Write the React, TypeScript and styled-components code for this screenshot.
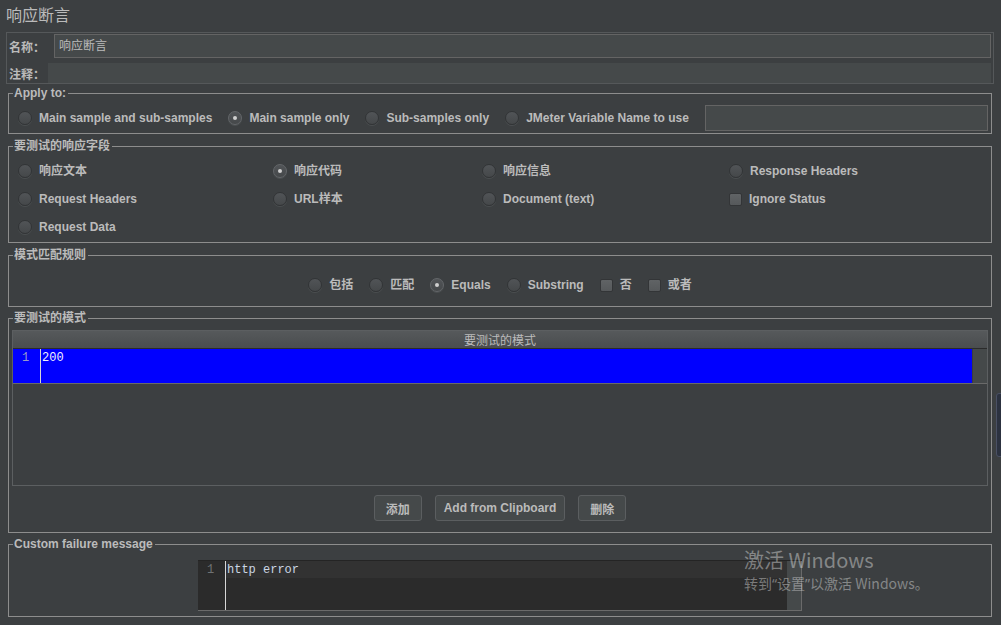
import styled, { createGlobalStyle } from 'styled-components';

const GlobalStyle = createGlobalStyle`
  html, body {
    margin: 0;
    padding: 0;
    background: #3c3f41;
  }
  body {
    font-family: "Liberation Sans", Arial, "Noto Sans CJK SC", sans-serif;
  }
`;

const fieldOptions = [
  { label: '响应文本' },
  { label: '响应代码', checked: true },
  { label: '响应信息' },
  { label: 'Response Headers' },
  { label: 'Request Headers' },
  { label: 'URL样本' },
  { label: 'Document (text)' },
  { label: 'Ignore Status', box: true },
  { label: 'Request Data' },
];

const ruleOptions = [
  { label: '包括' },
  { label: '匹配' },
  { label: 'Equals', checked: true },
  { label: 'Substring' },
  { label: '否', box: true },
  { label: '或者', box: true },
];

const App = () => {
  return (
    <Page>
      <GlobalStyle />
      <Title>响应断言</Title>

      <NamePanel>
        <FieldRow $height={24}>
          <FieldLabel $width={46}>名称：</FieldLabel>
          <TextBox $bordered>响应断言</TextBox>
        </FieldRow>
        <FieldRow $height={20}>
          <FieldLabel $width={40}>注释：</FieldLabel>
          <TextBox />
        </FieldRow>
      </NamePanel>

      <Sections>
        <Fieldset $mt={2}>
          <Legend>Apply to:</Legend>
          <OptionRow $pad="5px 3px 2px 9px">
            <Option>
              <Radio />
              Main sample and sub-samples
            </Option>
            <Option>
              <Radio $checked />
              Main sample only
            </Option>
            <Option>
              <Radio />
              Sub-samples only
            </Option>
            <Option>
              <Radio />
              JMeter Variable Name to use
            </Option>
            <VarField />
          </OptionRow>
        </Fieldset>

        <Fieldset $mt={5}>
          <Legend>要测试的响应字段</Legend>
          <OptionGrid>
            {fieldOptions.map((o) => (
              <Option key={o.label}>
                {o.box ? <CheckBox /> : <Radio $checked={o.checked} />}
                {o.label}
              </Option>
            ))}
          </OptionGrid>
        </Fieldset>

        <Fieldset $mt={5}>
          <Legend>模式匹配规则</Legend>
          <OptionRow $pad="14px 0 12px 0" $center>
            {ruleOptions.map((o) => (
              <Option key={o.label}>
                {o.box ? <CheckBox /> : <Radio $checked={o.checked} />}
                {o.label}
              </Option>
            ))}
          </OptionRow>
        </Fieldset>

        <Fieldset $mt={4}>
          <Legend>要测试的模式</Legend>
          <Table>
            <TableHeader>要测试的模式</TableHeader>
            <SelectedRow>
              <LineNo $onBlue>1</LineNo>
              <Caret />
              <CodeText $onBlue>200</CodeText>
              <RowStrip />
            </SelectedRow>
          </Table>
          <ButtonBar>
            <Button>添加</Button>
            <Button>Add from Clipboard</Button>
            <Button>删除</Button>
          </ButtonBar>
        </Fieldset>

        <Fieldset $mt={4}>
          <Legend>Custom failure message</Legend>
          <EditorWrap>
            <Editor>
              <LineNo>1</LineNo>
              <Caret />
              <EditorBody>
                <CurrentLine>
                  <CodeText>http error</CodeText>
                </CurrentLine>
              </EditorBody>
              <EditorStrip />
            </Editor>
          </EditorWrap>
        </Fieldset>
      </Sections>

      <Watermark>
        <WatermarkTitle>激活 Windows</WatermarkTitle>
        <WatermarkText>
          转到<Quote>“</Quote>设置<Quote>”</Quote>以激活 Windows。
        </WatermarkText>
      </Watermark>
      <EdgeTab />
    </Page>
  );
};

export default App;

const Page = styled.div`
  position: relative;
  width: 1001px;
  height: 625px;
  overflow: hidden;
  background: #3c3f41;
  color: #bbbbbb;
`;

const Title = styled.div`
  height: 30px;
  padding-left: 6px;
  font-family: "Noto Sans CJK SC", sans-serif;
  font-size: 16px;
  line-height: 28px;
  color: #bbbbbb;
`;

const NamePanel = styled.div`
  margin: 2px 7px 0 6px;
  padding: 1px 2px 0 1px;
  border: 1px solid #55585a;
  display: flex;
  flex-direction: column;
  gap: 5px;
`;

const FieldRow = styled.div<{ $height: number }>`
  display: flex;
  align-items: center;
  height: ${(p) => p.$height}px;
`;

const FieldLabel = styled.div<{ $width: number }>`
  width: ${(p) => p.$width}px;
  padding-left: 1px;
  box-sizing: border-box;
  font-size: 12px;
  font-weight: bold;
  color: #bbbbbb;
`;

const TextBox = styled.div<{ $bordered?: boolean }>`
  flex: 1;
  height: 100%;
  box-sizing: border-box;
  background: #45494a;
  border: 1px solid ${(p) => (p.$bordered ? '#646464' : '#45494a')};
  padding-left: 4px;
  font-size: 12px;
  line-height: 22px;
  color: #bbbbbb;
`;

const Sections = styled.div`
  display: flex;
  flex-direction: column;
`;

const Fieldset = styled.fieldset<{ $mt: number }>`
  margin: ${(p) => p.$mt}px 9px 0 8px;
  padding: 0;
  border: 1px solid #8d8d8d;
  min-width: 0;
`;

const Legend = styled.legend`
  margin-left: 4px;
  padding: 0 2px 0 1px;
  font-size: 12px;
  font-weight: bold;
  line-height: 14px;
  color: #bbbbbb;
`;

const OptionRow = styled.div<{ $pad: string; $center?: boolean }>`
  display: flex;
  align-items: center;
  justify-content: ${(p) => (p.$center ? 'center' : 'flex-start')};
  gap: 16px;
  padding: ${(p) => p.$pad};
  min-height: 18px;
`;

const OptionGrid = styled.div`
  display: grid;
  grid-template-columns: 255px 209px 247px 1fr;
  grid-auto-rows: 28px;
  align-items: center;
  padding: 4px 0 1px 9px;
`;

const Option = styled.label`
  display: flex;
  align-items: center;
  gap: 7px;
  height: 16px;
  font-size: 12px;
  font-weight: bold;
  line-height: 14px;
  color: #bbbbbb;
  white-space: nowrap;
`;

const Radio = styled.span<{ $checked?: boolean }>`
  position: relative;
  width: 14px;
  height: 14px;
  flex: none;
  border-radius: 50%;
  box-sizing: border-box;
  border: 1px solid ${(p) => (p.$checked ? '#636669' : '#323436')};
  background: linear-gradient(#515457, #45484a);
  box-shadow: 0 1px 0 rgba(90, 93, 95, 0.5);

  &::after {
    content: '';
    display: ${(p) => (p.$checked ? 'block' : 'none')};
    position: absolute;
    left: 4px;
    top: 4px;
    width: 4px;
    height: 4px;
    border-radius: 50%;
    background: #cfcfcf;
  }
`;

const CheckBox = styled.span`
  width: 13px;
  height: 13px;
  flex: none;
  box-sizing: border-box;
  border: 1px solid #333537;
  border-radius: 2px;
  background: linear-gradient(#606365, #56595b);
`;

const VarField = styled.div`
  margin-left: auto;
  width: 293px;
  height: 26px;
  box-sizing: border-box;
  background: #45494a;
  border: 1px solid #646464;
`;

const Table = styled.div`
  margin: 5px 3px 0 3px;
  height: 156px;
  box-sizing: border-box;
  border: 1px solid #5c5f61;
  display: flex;
  flex-direction: column;
`;

const TableHeader = styled.div`
  height: 18px;
  flex: none;
  box-sizing: border-box;
  border-bottom: 1px solid #2b2b2b;
  background: linear-gradient(#56595b, #4a4d4f);
  font-size: 12px;
  line-height: 17px;
  text-align: center;
  color: #bbbbbb;
  font-family: "Noto Sans CJK SC", sans-serif;
`;

const SelectedRow = styled.div`
  height: 35px;
  flex: none;
  display: flex;
  box-sizing: border-box;
  border-bottom: 1px solid #6a6a6a;
  background: #0000ff;
`;

const LineNo = styled.div<{ $onBlue?: boolean }>`
  width: 27px;
  flex: none;
  padding: 2px 0 0 9px;
  box-sizing: border-box;
  font-family: "Liberation Mono", "DejaVu Sans Mono", monospace;
  font-size: 12px;
  line-height: 14px;
  color: ${(p) => (p.$onBlue ? '#9a9ac8' : '#6f7274')};
`;

const Caret = styled.div`
  width: 1px;
  flex: none;
  background: #d6d6d6;
`;

const CodeText = styled.div<{ $onBlue?: boolean }>`
  flex: 1;
  padding: 2px 0 0 1px;
  font-family: "Liberation Mono", "DejaVu Sans Mono", monospace;
  font-size: 12px;
  line-height: 14px;
  color: ${(p) => (p.$onBlue ? '#f0f0ff' : '#cbd6e4')};
`;

const RowStrip = styled.div`
  width: 14px;
  flex: none;
  background: #45494a;
  border-left: 1px solid #3a3d3f;
`;

const ButtonBar = styled.div`
  display: flex;
  justify-content: center;
  gap: 13px;
  margin-top: 9px;
  padding-bottom: 11px;
`;

const Button = styled.button`
  min-width: 48px;
  height: 26px;
  padding: 0 8px;
  background: #45494a;
  border: 1px solid #5b5e60;
  border-radius: 3px;
  font-family: "Liberation Sans", Arial, "Noto Sans CJK SC", sans-serif;
  font-size: 12px;
  font-weight: bold;
  color: #bbbbbb;
`;

const EditorWrap = styled.div`
  display: flex;
  justify-content: center;
  padding: 9px 0 5px;
`;

const Editor = styled.div`
  width: 604px;
  height: 51px;
  display: flex;
  box-sizing: border-box;
  background: #2b2b2b;
  border-top: 1px solid #242424;
  border-bottom: 1px solid #6a6a6a;
`;

const EditorBody = styled.div`
  flex: 1;
`;

const CurrentLine = styled.div`
  height: 17px;
  background: #323232;
`;

const EditorStrip = styled.div`
  width: 14px;
  flex: none;
  background: #45494a;
  border-right: 1px solid #6a6a6a;
`;

const Watermark = styled.div`
  position: absolute;
  left: 744px;
  top: 547px;
  font-family: "Noto Sans CJK SC", sans-serif;
  color: rgba(255, 255, 255, 0.38);
  pointer-events: none;
`;

const WatermarkTitle = styled.div`
  font-size: 20px;
  line-height: 26px;
`;

const WatermarkText = styled.div`
  font-size: 14px;
  line-height: 20px;
`;

const Quote = styled.span`
  font-family: "Noto Sans", sans-serif;
`;

const EdgeTab = styled.div`
  position: absolute;
  left: 996px;
  top: 393px;
  width: 6px;
  height: 62px;
  border-radius: 3px 0 0 3px;
  background: #2c3240;
  border: 1px solid #4a5064;
`;
